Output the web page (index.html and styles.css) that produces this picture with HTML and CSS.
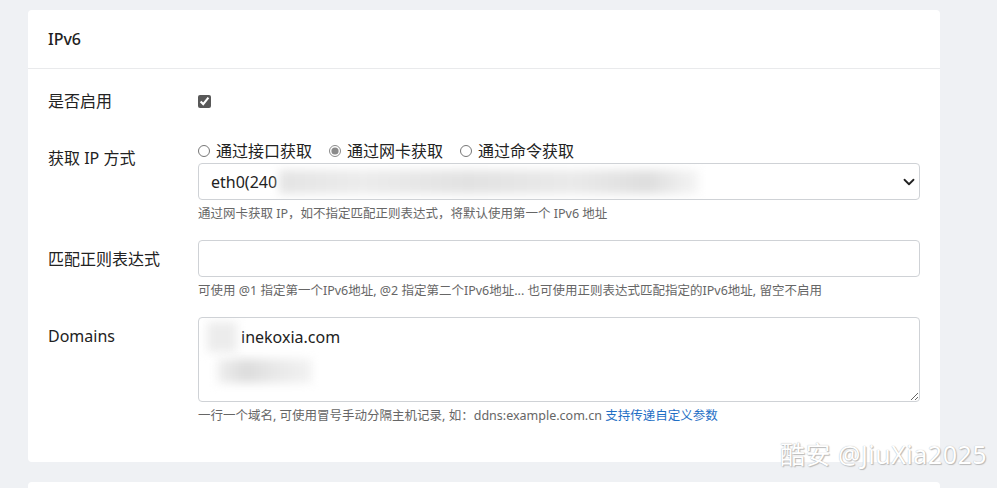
FILE: index.html
```html
<!DOCTYPE html>
<html lang="zh-CN">
<head>
<meta charset="utf-8">
<title>IPv6</title>
<link rel="stylesheet" href="styles.css">
</head>
<body>
<div class="page">
  <div class="card">
    <div class="card-header">IPv6</div>
    <div class="card-body">
      <div class="row row-check">
        <label class="label label-plain">是否启用</label>
        <div class="control">
          <input type="checkbox" class="check" checked>
        </div>
      </div>

      <div class="row">
        <label class="label">获取 IP 方式</label>
        <div class="control">
          <div class="radios">
            <label class="radio"><input type="radio" name="way">通过接口获取</label>
            <label class="radio"><input type="radio" name="way" checked>通过网卡获取</label>
            <label class="radio"><input type="radio" name="way">通过命令获取</label>
          </div>
          <div class="select">
            <span>eth0(240</span><span class="smear smear-select"></span>
            <svg class="chevron" width="12" height="12" viewBox="0 0 16 16"><path d="M2 5l6 6 6-6" fill="none" stroke="#222" stroke-width="2.4" stroke-linecap="round" stroke-linejoin="round"/></svg>
          </div>
          <div class="help">通过网卡获取 IP，如不指定匹配正则表达式，将默认使用第一个 IPv6 地址</div>
        </div>
      </div>

      <div class="row">
        <label class="label">匹配正则表达式</label>
        <div class="control">
          <div class="input"></div>
          <div class="help">可使用 @1 指定第一个IPv6地址, @2 指定第二个IPv6地址... 也可使用正则表达式匹配指定的IPv6地址, 留空不启用</div>
        </div>
      </div>

      <div class="row">
        <label class="label">Domains</label>
        <div class="control">
          <div class="textarea">
            <div class="line"><span class="smear smear-host"></span>inekoxia.com</div>
            <div class="line"><span class="smear smear-line"></span></div>
          </div>
          <div class="help">一行一个域名, 可使用冒号手动分隔主机记录, 如：ddns:example.com.cn <a class="link">支持传递自定义参数</a></div>
        </div>
      </div>
    </div>
  </div>
  <div class="card card-next"></div>
</div>
<div class="watermark">酷安 @JiuXia2025</div>
</body>
</html>
```

FILE: styles.css
```css
body {
	margin: 0;
	background-color: #eff1f4;
	font-family: "Noto Sans", "Noto Sans CJK SC", sans-serif;
	font-size: 16px;
	color: #222;
	overflow: hidden;
}
.page {
	padding: 10px 57px 0 28px;
}
.card {
	background-color: #FFFFFF;
	border-radius: 4px;
}
.card-header {
	padding: 17px 20px 17px 20px;
	line-height: 24px;
	font-size: 16px;
	font-weight: 500;
	border-bottom: 1px solid #e9eaec;
}
.card-body {
	padding: 20px 20px 20px 20px;
}
.card-next {
	margin-top: 20px;
	height: 40px;
}
.row {
	display: flex;
	margin-bottom: 16px;
}
.row-check {
	min-height: 34px;
}
.label {
	width: 150px;
	flex: none;
	padding-top: 7px;
	line-height: 24px;
}
.label-plain {
	padding-top: 0;
}
.control {
	flex: 1;
	min-width: 0;
}
.check {
	margin: 6px 0 0 0;
	width: 13px;
	height: 13px;
	accent-color: #585858;
}
.radios {
	display: flex;
	gap: 17px;
	line-height: 24px;
}
.radio {
	display: flex;
	align-items: center;
}
.radio input {
	margin: 0 6px 0 0;
	width: 12px;
	height: 12px;
	accent-color: #8a8a8a;
}
.select,
.input,
.textarea {
	box-sizing: border-box;
	border: 1px solid #cfd2d6;
	border-radius: 4px;
	background-color: #fff;
}
.select {
	position: relative;
	height: 37px;
	padding: 0 12px;
	display: flex;
	align-items: center;
	white-space: nowrap;
	overflow: hidden;
}
.chevron {
	position: absolute;
	right: 4px;
	top: 12px;
}
.input {
	height: 37px;
}
.textarea {
	height: 85px;
	padding: 6px 8px;
	line-height: 24px;
	resize: vertical;
	overflow: auto;
}
.line {
	display: flex;
	align-items: center;
	height: 26px;
}
.smear {
	display: inline-block;
	filter: blur(5px);
}
.smear-select {
	width: 420px;
	height: 24px;
	margin-left: 2px;
	background: linear-gradient(90deg, #e4e4e4 0%, #ececec 20%, #e2e2e2 45%, #eaeaea 70%, #dedede 88%, #f6f6f6 100%);
}
.smear-host {
	width: 30px;
	height: 30px;
	margin-right: 4px;
	background-color: #ececec;
}
.smear-line {
	width: 95px;
	height: 24px;
	margin: 16px 0 0 10px;
	background: linear-gradient(90deg, #f0f0f0 0%, #dcdcdc 30%, #e8e8e8 60%, #f2f2f2 100%);
}
.help {
	margin-top: 4px;
	font-size: 12.5px;
	line-height: 20px;
	color: #666;
}
.link {
	color: #1f6fc5;
}
.watermark {
	position: absolute;
	left: 780px;
	top: 435px;
	font-size: 25px;
	color: #fff;
	letter-spacing: 0.5px;
	text-shadow: 0 0 1px #aaa, 1px 1px 1px #bbb;
}
```
